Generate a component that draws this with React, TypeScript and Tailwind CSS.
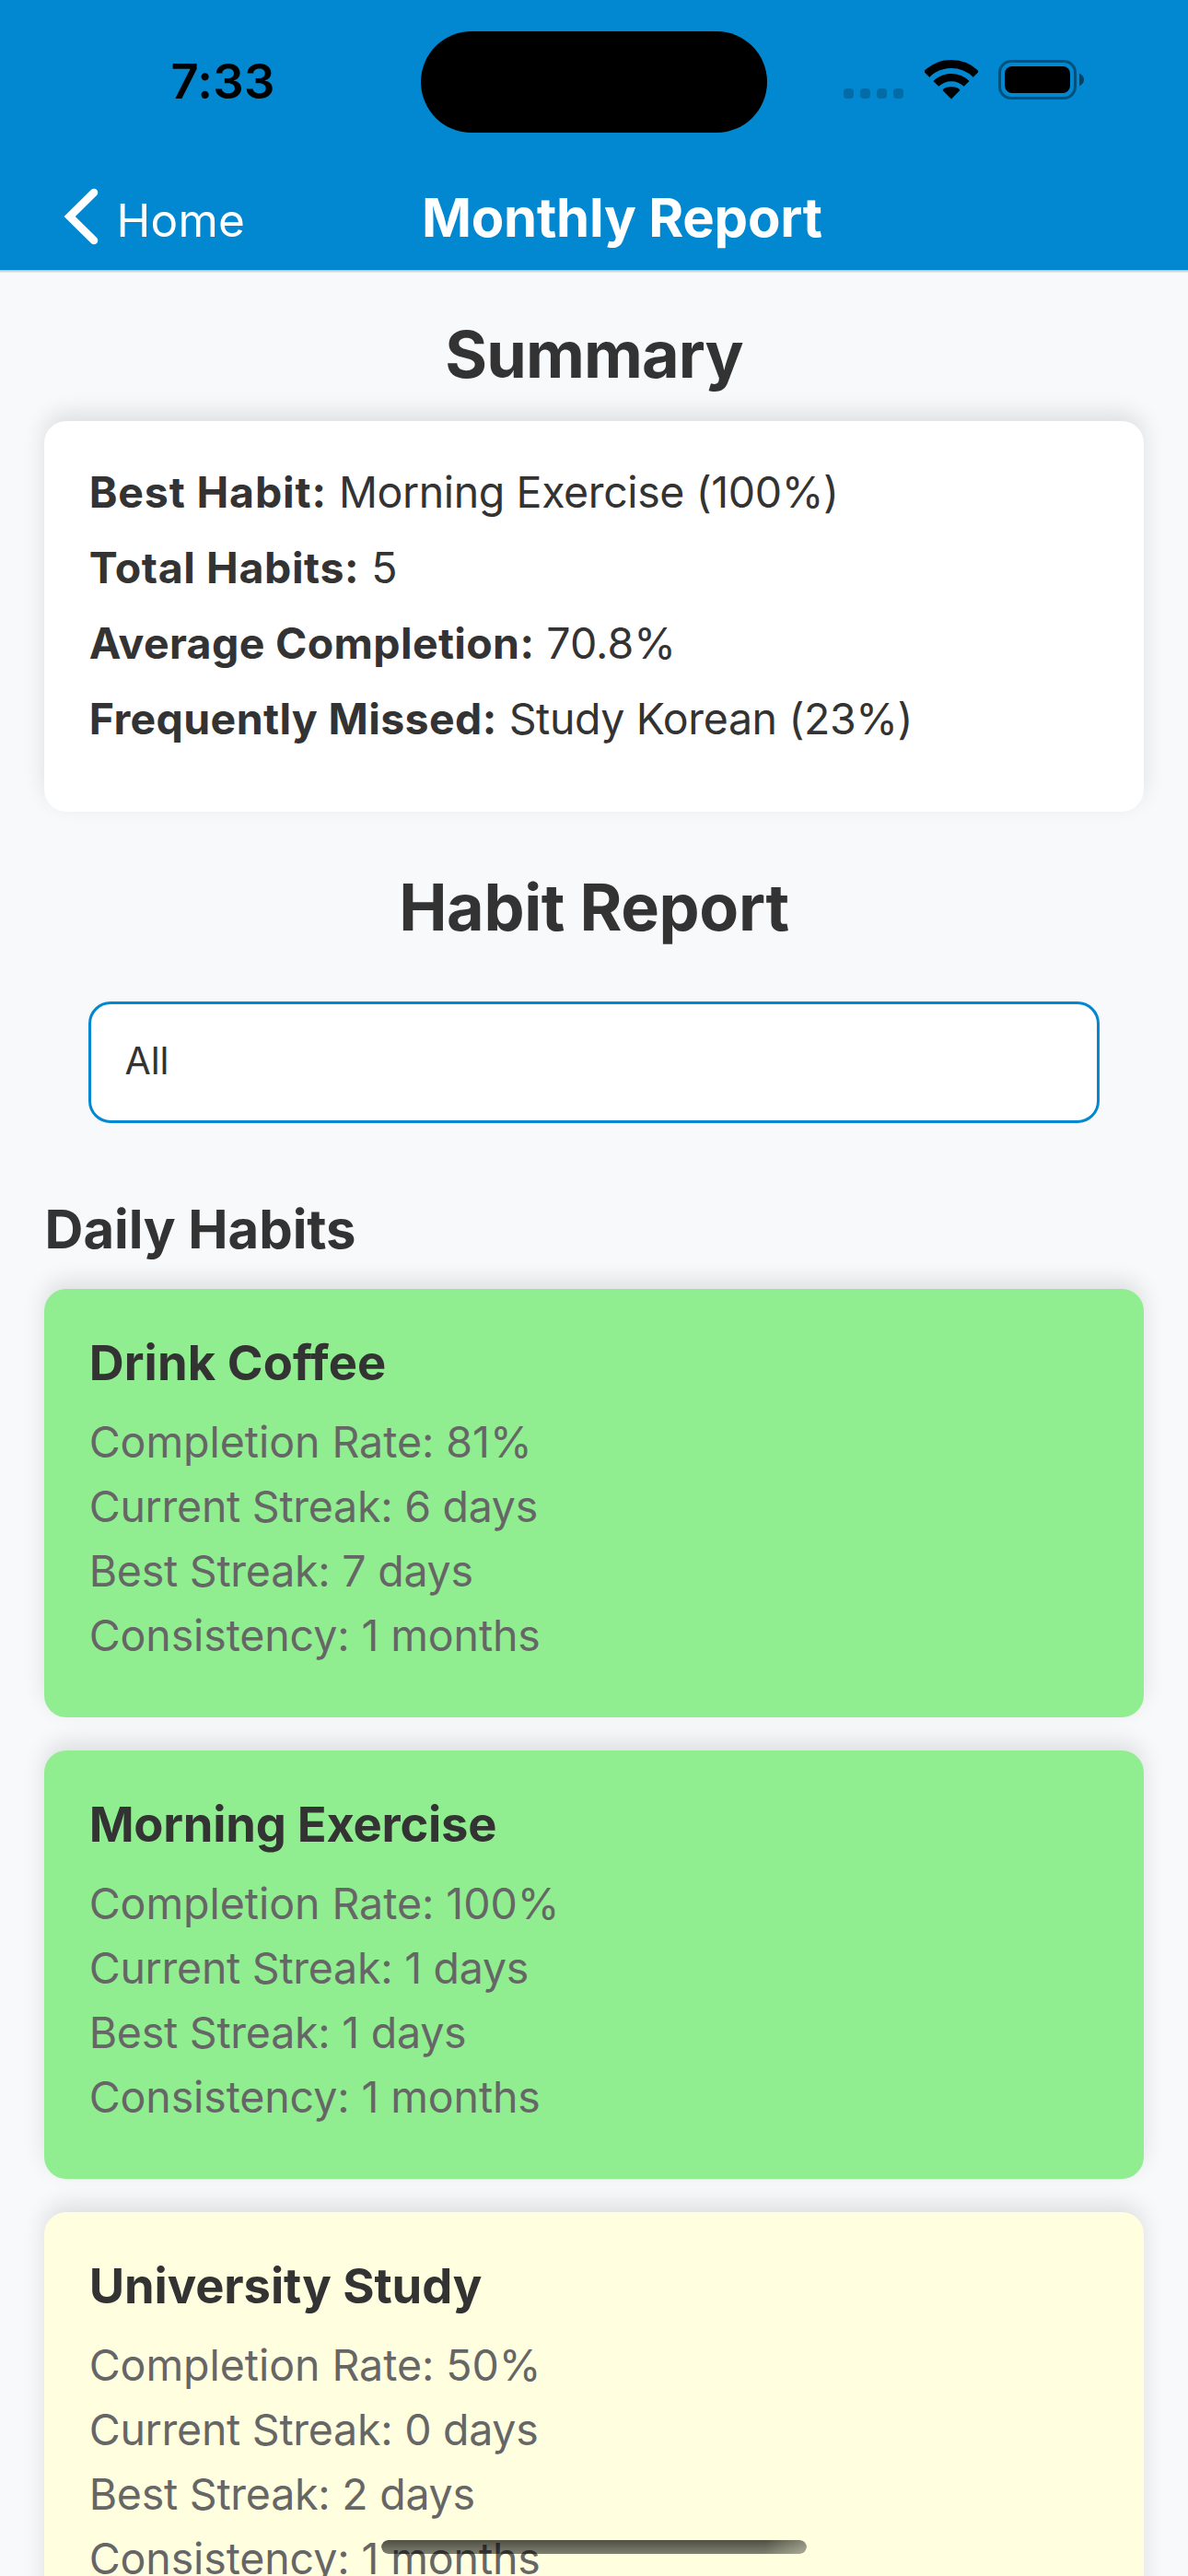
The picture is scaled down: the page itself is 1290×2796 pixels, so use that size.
type SummaryItem = { label: string; value: string; labelClass: string; valueClass: string };

type Habit = {
  name: string;
  nameClass: string;
  cardClass: string;
  rate: number;
  current: number;
  best: number;
  months: number;
};

const summary: SummaryItem[] = [
  { label: "Best Habit:", value: "Morning Exercise (100%)", labelClass: "tracking-[0.85px]", valueClass: "tracking-[-0.4px]" },
  { label: "Total Habits:", value: "5", labelClass: "tracking-[0.6px]", valueClass: "tracking-normal" },
  { label: "Average Completion:", value: "70.8%", labelClass: "tracking-[0.33px]", valueClass: "tracking-normal" },
  { label: "Frequently Missed:", value: "Study Korean (23%)", labelClass: "tracking-[0.35px]", valueClass: "tracking-[-0.38px]" },
];

const habits: Habit[] = [
  { name: "Drink Coffee", nameClass: "tracking-[0.1px]", cardClass: "bg-[#90ee90]", rate: 81, current: 6, best: 7, months: 1 },
  { name: "Morning Exercise", nameClass: "tracking-[-0.25px]", cardClass: "bg-[#90ee90]", rate: 100, current: 1, best: 1, months: 1 },
  { name: "University Study", nameClass: "tracking-[-0.1px]", cardClass: "bg-[#ffffe0]", rate: 50, current: 0, best: 2, months: 1 },
];

function WifiIcon() {
  return (
    <svg width="58" height="43" viewBox="0 0 58 43" fill="none" stroke="#000">
      <path d="M2.13 15.63A38 38 0 0 1 55.87 15.63" strokeWidth="8.8" />
      <path d="M12.4 25.9A23.5 23.5 0 0 1 45.6 25.9" strokeWidth="8.3" />
      <path d="M29 42.5L19.6 33.1Q20.8 29.2 29 29.2T38.4 33.1Z" fill="#000" stroke="none" />
    </svg>
  );
}

function BatteryIcon() {
  return (
    <svg width="93" height="43" viewBox="0 0 93 43">
      <rect x="1.5" y="1.5" width="82" height="40" rx="12.5" fill="none" stroke="#000" strokeOpacity="0.4" strokeWidth="3" />
      <rect x="7" y="7" width="71" height="29" rx="8" />
      <path d="M88 14.8C91.3 16 93 18.5 93 21.5S91.3 27 88 28.2Z" fillOpacity="0.5" />
    </svg>
  );
}

function StatusBar() {
  return (
    <div className="flex h-[177px] items-start">
      <div className="w-[457px] pt-[58px] pl-[185.6px] text-[52.5px] leading-[60px] font-semibold tracking-[0.26px] text-black">
        7:33
      </div>
      <div className="mt-[34px] h-[110px] w-[376px] rounded-full bg-black" />
      <div className="flex items-start pt-[65px] pl-[83px]">
        <div className="flex gap-[7px] pt-[31px]">
          {[0, 1, 2, 3].map((dot) => (
            <span key={dot} className="size-[11px] rounded-[4px] bg-black/20" />
          ))}
        </div>
        <div className="ml-[22.6px]">
          <WifiIcon />
        </div>
        <div className="ml-[22.4px]">
          <BatteryIcon />
        </div>
      </div>
    </div>
  );
}

function NavBar() {
  return (
    <div className="flex items-start text-white">
      <div className="flex w-[458px] items-start pl-[68px]">
        <svg className="mt-[26px]" width="40" height="64" viewBox="0 0 40 64" fill="none">
          <path d="M34 6L7.7 32L34 58" stroke="#fff" strokeWidth="8.6" strokeLinecap="round" />
        </svg>
        <span className="mt-[32px] ml-[18.4px] text-[49.5px] leading-[60px] tracking-[0.3px]">Home</span>
      </div>
      <h1 className="mt-[23px] text-[58px] leading-[72px] font-bold tracking-[-0.25px]">Monthly Report</h1>
    </div>
  );
}

function HabitCard({ habit }: { habit: Habit }) {
  return (
    <article
      className={`${habit.cardClass} rounded-[24px] pt-12 pr-12 pb-[54px] pl-[48.7px] shadow-[0_-9px_24px_rgba(0,0,0,0.11)]`}
    >
      <h3 className={`${habit.nameClass} text-[52.5px] leading-[64px] font-bold text-[#333]`}>{habit.name}</h3>
      <div className="mt-[19px] text-[46.5px] leading-[70px] text-[#666]">
        <p className="tracking-[-0.05px]">Completion Rate: {habit.rate}%</p>
        <p className="tracking-[-0.27px]">Current Streak: {habit.current} days</p>
        <p className="tracking-[-0.25px]">Best Streak: {habit.best} days</p>
        <p className="tracking-[-0.12px]">Consistency: {habit.months} months</p>
      </div>
    </article>
  );
}

export default function App() {
  return (
    <div className="relative h-[2796px] w-[1290px] overflow-hidden bg-[#f8f9fb] font-['Inter',sans-serif] text-[#333]">
      <header className="h-[293px] bg-[#0288d1] shadow-[0_1px_0_#c4c6c9,0_2px_0_#d3d5d8,0_3px_0_#e6e8ea]">
        <StatusBar />
        <NavBar />
      </header>

      <main className="flex flex-col px-12 pt-[49px]">
        <h2 className="text-center text-[70px] leading-[86px] font-bold tracking-[-0.9px]">Summary</h2>
        <section className="mt-[29px] flex flex-col gap-6 rounded-[24px] bg-white pt-12 pr-12 pb-[72px] pl-[48.7px] text-[46.5px] leading-[58px] shadow-[0_-9px_24px_rgba(0,0,0,0.11)]">
          {summary.map((item) => (
            <p key={item.label}>
              <strong className={`${item.labelClass} font-bold`}>{item.label}</strong>{" "}
              <span className={item.valueClass}>{item.value}</span>
            </p>
          ))}
        </section>

        <h2 className="mt-[61px] text-center text-[70px] leading-[86px] font-bold tracking-[-0.33px]">Habit Report</h2>
        <button className="mx-12 mt-[59px] flex h-[132px] items-center rounded-[24px] border-[3px] border-[#0288d1] bg-white pb-[2px] pl-[36.4px] text-left text-[41px]">
          All
        </button>

        <h2 className="mt-[79px] pl-[0.6px] text-[58px] leading-[72px] font-bold tracking-[-0.08px]">Daily Habits</h2>
        <div className="mt-[29px] flex flex-col gap-9">
          {habits.map((habit) => (
            <HabitCard key={habit.name} habit={habit} />
          ))}
        </div>
      </main>

      <div className="absolute top-[2757px] left-[414px] h-[15px] w-[462px] rounded-full bg-linear-to-b from-black/69 to-black/50 [mask-image:linear-gradient(100deg,#000_90%,rgba(0,0,0,0.65))]" />
    </div>
  );
}
